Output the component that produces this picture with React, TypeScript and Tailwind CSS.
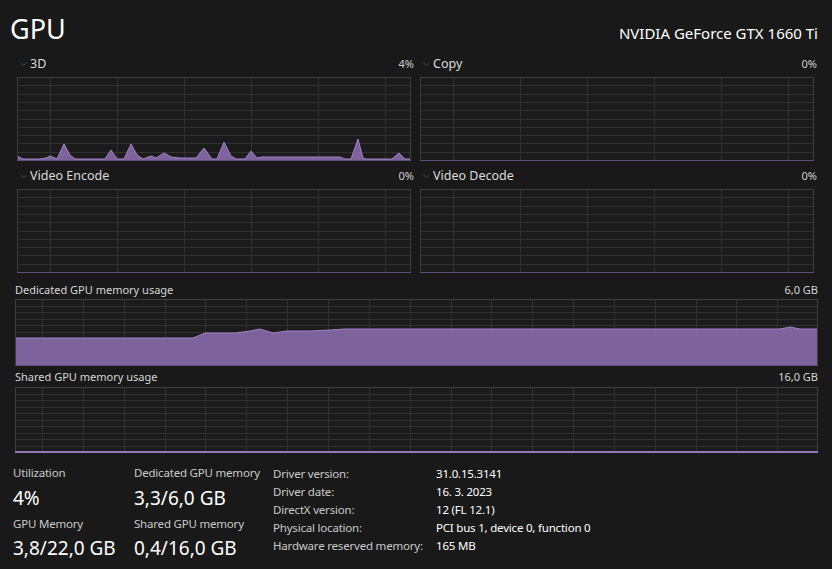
import React from 'react';

type Pt = [number, number];

const GRID = '#303030';
const BORDER = '#3d3d3d';

interface ChartProps {
  w: number;
  h: number;
  rows: number;
  colOffset: number;
  colStep: number;
  area?: Pt[];
  ox?: number;
  oy?: number;
  baseLine?: number;
}

function Chart({ w, h, rows, colOffset, colStep, area, ox = 0, oy = 0, baseLine = 1 }: ChartProps) {
  const cols: number[] = [];
  for (let x = colOffset; x < w - 1; x += colStep) cols.push(Math.round(x));
  const hLines: number[] = [];
  for (let i = 1; i < rows; i++) hLines.push(Math.round((i * (h - 1)) / rows));

  let d = '';
  if (area) {
    const pts = area.map(([x, y]) => [x - ox, y - oy]);
    d = `M${pts[0][0]},${h - 1} ` + pts.map(([x, y]) => `L${x},${y}`).join(' ') + ` L${pts[pts.length - 1][0]},${h - 1} Z`;
  }
  const line = area
    ? 'M' + area.map(([x, y]) => `${x - ox},${y - oy}`).join(' L')
    : '';

  return (
    <svg width={w} height={h} className="block">
      <rect x={0} y={0} width={w} height={h} fill="#1b1b1b" />
      {cols.map((x) => (
        <line key={'v' + x} x1={x + 0.5} x2={x + 0.5} y1={0} y2={h} stroke={GRID} strokeWidth={1} shapeRendering="crispEdges" />
      ))}
      {hLines.map((y) => (
        <line key={'h' + y} x1={0} x2={w} y1={y + 0.5} y2={y + 0.5} stroke={GRID} strokeWidth={1} shapeRendering="crispEdges" />
      ))}
      {area && (
        <>
          <path d={d} fill="#8466a3" fillOpacity={0.95} />
          <path d={line} fill="none" stroke="#a184c8" strokeWidth={1} />
        </>
      )}
      <rect x={0.5} y={0.5} width={w - 1} height={h - 1} fill="none" stroke={BORDER} strokeWidth={1} shapeRendering="crispEdges" />
      <line x1={0} x2={w} y1={h - baseLine / 2} y2={h - baseLine / 2} stroke={baseLine > 1 ? '#9579bd' : '#5e4f78'} strokeWidth={baseLine} shapeRendering="crispEdges" />
    </svg>
  );
}

function Chevron() {
  return (
    <svg width="7" height="5" viewBox="0 0 7 5">
      <path d="M0.5 0.8 L3.5 3.8 L6.5 0.8" fill="none" stroke="#4a4a4a" strokeWidth="1" />
    </svg>
  );
}

function SmallPanel({ title, value, area, ox, oy }: { title: string; value: string; area?: Pt[]; ox?: number; oy?: number }) {
  return (
    <div className="flex flex-col w-[397px]">
      <div className="flex items-center justify-between h-[16px] pl-[3px] text-[12.5px] leading-[16px]">
        <div className="flex items-center gap-[3px] text-[#dcdcdc]">
          <Chevron />
          <span>{title}</span>
        </div>
        <span className="text-[11px] text-[#cfcfcf]">{value}</span>
      </div>
      <div className="mt-[5px]">
        <Chart w={394} h={84} rows={10} colOffset={33} colStep={67} area={area} ox={ox} oy={oy} />
      </div>
    </div>
  );
}

const threeD: Pt[] = [
  [17, 155], [23, 158], [40, 158], [46, 157], [50, 155], [55, 157], [57, 158], [64, 143], [70, 154], [75, 158],
  [105, 158], [111, 149], [117, 158], [124, 158], [131, 143], [137, 154], [143, 158], [151, 155], [156, 157],
  [164, 152], [171, 156], [180, 157], [196, 157], [204, 147], [212, 158], [217, 158], [224, 141], [231, 155],
  [236, 158], [245, 158], [251, 150], [257, 157], [262, 156], [340, 156], [345, 158], [351, 158], [358, 138],
  [363, 157], [366, 158], [392, 158], [399, 152], [405, 158], [411, 158],
];

const dedicated: Pt[] = [
  [15, 338], [193, 338], [205, 333], [235, 333], [250, 331], [260, 329], [273, 333], [287, 331], [310, 331],
  [330, 330], [345, 329], [780, 329], [790, 327], [800, 329], [818, 329],
];

const details: [string, string][] = [
  ['Driver version:', '31.0.15.3141'],
  ['Driver date:', '16. 3. 2023'],
  ['DirectX version:', '12 (FL 12.1)'],
  ['Physical location:', 'PCI bus 1, device 0, function 0'],
  ['Hardware reserved memory:', '165 MB'],
];

export default function App() {
  return (
    <div
      className="w-[832px] h-[569px] overflow-hidden bg-[#191919] text-white"
      style={{ fontFamily: '"Noto Sans", "Open Sans", sans-serif' }}
    >
      <div className="flex items-end justify-between h-[44px] pl-[10px] pr-[14px]">
        <span className="text-[27px] leading-[30px] text-white">GPU</span>
        <span className="text-[15px] leading-[20px] mb-[1px] text-white">NVIDIA GeForce GTX 1660 Ti</span>
      </div>

      <div className="grid grid-cols-[397px_397px] gap-x-[6px] gap-y-[7px] pl-[17px] mt-[12px]">
        <SmallPanel title="3D" value="4%" area={threeD} ox={17} oy={76} />
        <SmallPanel title="Copy" value="0%" />
        <SmallPanel title="Video Encode" value="0%" />
        <SmallPanel title="Video Decode" value="0%" />
      </div>

      <div className="flex flex-col pl-[15px] mt-[10px] w-[818px]">
        <div className="flex items-center justify-between h-[14px] text-[11px] text-[#d6d6d6]">
          <span>Dedicated GPU memory usage</span>
          <span>6,0 GB</span>
        </div>
        <div className="mt-[2px]">
          <Chart w={803} h={67} rows={10} colOffset={27} colStep={40.85} area={dedicated} ox={15} oy={299} />
        </div>
        <div className="flex items-center justify-between h-[14px] mt-[4px] text-[11px] text-[#d6d6d6]">
          <span>Shared GPU memory usage</span>
          <span>16,0 GB</span>
        </div>
        <div className="mt-[3px]">
          <Chart w={803} h={66} rows={10} colOffset={27} colStep={40.85} baseLine={2} />
        </div>
      </div>

      <div className="flex mt-[12px] pl-[13px]">
        <div className="flex flex-col w-[121px]">
          <span className="text-[11.5px] tracking-[-0.2px] leading-[16px] text-[#c9c9c9]">Utilization</span>
          <span className="text-[19px] leading-[26px] mt-[4px] text-white">4%</span>
          <span className="text-[11.5px] tracking-[-0.2px] leading-[16px] mt-[5px] text-[#c9c9c9]">GPU Memory</span>
          <span className="text-[19px] leading-[26px] mt-[3px] text-white">3,8/22,0 GB</span>
        </div>
        <div className="flex flex-col w-[139px]">
          <span className="text-[11.5px] tracking-[-0.2px] leading-[16px] text-[#c9c9c9]">Dedicated GPU memory</span>
          <span className="text-[19px] leading-[26px] mt-[4px] text-white">3,3/6,0 GB</span>
          <span className="text-[11.5px] tracking-[-0.2px] leading-[16px] mt-[5px] text-[#c9c9c9]">Shared GPU memory</span>
          <span className="text-[19px] leading-[26px] mt-[3px] text-white">0,4/16,0 GB</span>
        </div>
        <div className="flex flex-col">
          {details.map(([k, v]) => (
            <div key={k} className="flex h-[18px] items-center text-[11.5px] tracking-[-0.2px] leading-[16px]">
              <span className="w-[163px] text-[#c9c9c9]">{k}</span>
              <span className="text-white">{v}</span>
            </div>
          ))}
        </div>
      </div>
    </div>
  );
}
